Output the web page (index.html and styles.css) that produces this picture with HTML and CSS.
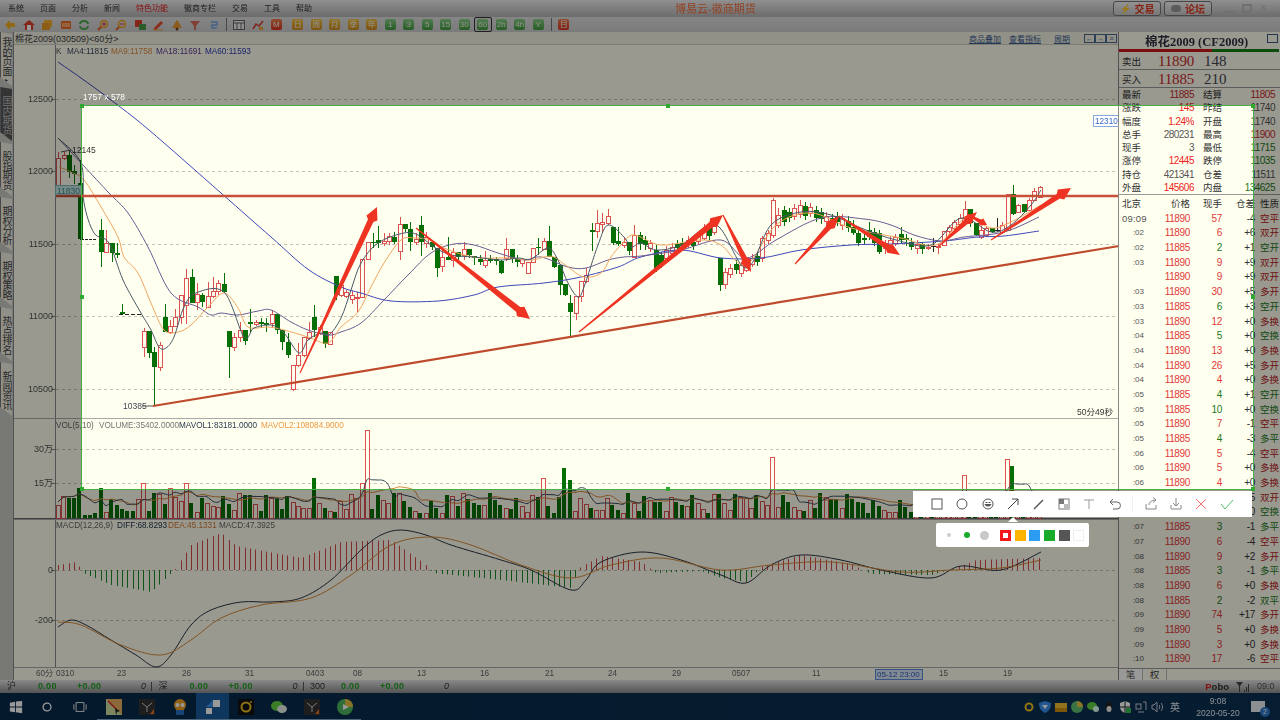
FILE: index.html
```html
<!DOCTYPE html>
<html lang="zh">
<head>
<meta charset="utf-8">
<title>博易云-徽商期货</title>
<link rel="stylesheet" href="styles.css">
</head>
<body>
<header class="menubar">
  <nav class="menu">
    <span>系统</span><span>页面</span><span>分析</span><span>新闻</span><span class="hot">特色功能</span><span>徽商专栏</span><span>交易</span><span>工具</span><span>帮助</span>
  </nav>
  <div class="app-title">博易云-徽商期货</div>
  <div class="top-actions">
    <button class="top-btn"><i class="bolt">⚡</i>交易</button>
    <button class="top-btn"><i class="bubble"></i>论坛</button>
    <div class="winctl"><span class="w-min"></span><span class="w-max"></span><span class="w-close">×</span></div>
  </div>
</header>

<div class="toolbar">
  <span class="tool"><svg viewBox="0 0 12 12"><path d="M1 6 6 1v3h5v4H6v3z" fill="#f0b020"/></svg></span>
  <span class="tool"><svg viewBox="0 0 12 12"><path d="M6 1 0 6h2v5h8V6h2z" fill="#d8402a"/><rect x="4" y="6" width="4" height="5" fill="#fff"/></svg></span>
  <span class="tool"><svg viewBox="0 0 12 12"><rect x="3" y="1" width="8" height="7" fill="#f8b030"/><rect x="1" y="4" width="8" height="7" fill="#e89a20"/></svg></span>
  <span class="tool"><svg viewBox="0 0 12 12"><rect x="1" y="2" width="10" height="8" rx="1" fill="#ea6a28"/><path d="M3 4v4M5 4v4M7 4v4M9 4v4" stroke="#ffe0a0"/></svg></span>
  <span class="tool"><svg viewBox="0 0 12 12" fill="none" stroke="#4aa84a" stroke-width="2"><path d="M2 5a4 3 0 0 1 8 0M10 7a4 3 0 0 1-8 0"/></svg></span>
  <span class="tool"><svg viewBox="0 0 12 12" fill="none"><circle cx="7" cy="5" r="3.5" stroke="#f0a020" stroke-width="1.5"/><path d="M4 8 1 11" stroke="#e06020" stroke-width="2"/><path d="M5 5h4M7 3v4" stroke="#d83020"/></svg></span>
  <span class="tool"><svg viewBox="0 0 12 12" fill="none"><circle cx="7" cy="5" r="3.5" stroke="#f0a020" stroke-width="1.5"/><path d="M4 8 1 11" stroke="#e06020" stroke-width="2"/><path d="M5 5h4" stroke="#d83020"/></svg></span>
  <span class="tool"><svg viewBox="0 0 12 12"><rect x="1" y="1" width="7" height="7" fill="#e0402a"/><rect x="5" y="5" width="7" height="6" fill="#4a9a4a"/></svg></span>
  <span class="tool"><svg viewBox="0 0 12 12"><path d="M2 9 9 2l2 2-7 7H2z" fill="#e84a30"/><path d="M1 11h10" stroke="#f0a040"/></svg></span>
  <span class="tool"><svg viewBox="0 0 12 12"><path d="M6 1c2 2 3 5 5 8H1c2-3 3-6 5-8z" fill="#e89a30"/><circle cx="6" cy="10" r="1.5" fill="#704020"/></svg></span>
  <span class="tool"><svg viewBox="0 0 12 12"><path d="M1 2h10L7 7v4H5V7z" fill="#d86a5a"/></svg></span>
  <span class="tool"><svg viewBox="0 0 12 12"><path d="M3 3h6v3H4v3h5" fill="none" stroke="#8ab0e0" stroke-width="2"/></svg></span>
  <span class="tool-sep"></span>
  <span class="tool"><svg viewBox="0 0 12 12"><rect x=".5" y="1.5" width="11" height="9" fill="#eee" stroke="#666"/><path d="M1 4h10M4 4v6M8 4v6" stroke="#666"/></svg></span>
  <span class="tool"><svg viewBox="0 0 12 12" fill="none"><path d="M1 10 4 5l3 2 4-5" stroke="#d83a2a" stroke-width="1.5"/><rect x="7" y="8" width="4" height="3" fill="#e8a030"/></svg></span>
  <span class="tool"><b class="sq sq-red">M</b></span>
  <span class="tool tool-gap"><b class="sq sq-or">日</b></span>
  <span class="tool"><b class="sq sq-or">周</b></span>
  <span class="tool"><b class="sq sq-or">月</b></span>
  <span class="tool"><b class="sq sq-or">季</b></span>
  <span class="tool"><b class="sq sq-or">年</b></span>
  <span class="tool"><b class="sq sq-gr">1</b></span>
  <span class="tool"><b class="sq sq-gr">3</b></span>
  <span class="tool"><b class="sq sq-gr">5</b></span>
  <span class="tool"><b class="sq sq-gr">15</b></span>
  <span class="tool"><b class="sq sq-gr">30</b></span>
  <span class="tool tool-on"><b class="sq sq-gr">60</b></span>
  <span class="tool"><b class="sq sq-gr">2h</b></span>
  <span class="tool"><b class="sq sq-gr">4h</b></span>
  <span class="tool"><b class="sq sq-gr">Y</b></span>
  <span class="tool-sep"></span>
  <span class="tool"><b class="sq sq-red">目</b></span>
</div>

<main class="main">
  <aside class="sidetabs">
    <div class="stab">我的页面<i>▸</i></div>
    <div class="stab stab-on">国内期货</div>
    <div class="stab">股指期货</div>
    <div class="stab">期权分析</div>
    <div class="stab">期权策略</div>
    <div class="stab">热点排名</div>
    <div class="stab">新闻资讯</div>
  </aside>

  <section class="workspace">
    <div class="chart-head">
      <span class="chart-name">棉花2009(030509)&lt;60分&gt;</span>
      <span class="chart-links"><a>商品叠加</a><a>查看指标</a><a class="link-gap">周期</a></span>
      <span class="chart-nav"><i>←</i><i>→</i><i>≡</i></span>
    </div>
    <svg id="chart" class="chart" viewBox="13 45 1105 635" xmlns="http://www.w3.org/2000/svg"></svg>
  </section>

  <aside class="quote">
    <div class="q-title"><span>棉花2009 (CF2009)</span><i class="q-box"></i></div>
    <div class="q-bar"><i></i></div>
    <div class="q-book"><span class="lbl">卖出</span><b class="up">11890</b><em>148</em></div>
    <div class="q-book"><span class="lbl">买入</span><b class="up">11885</b><em>210</em></div>
    <div class="q-stats">
      <span>最新</span><b class="up">11885</b><span>结算</span><b class="up">11805</b>
      <span>涨跌</span><b class="hi">145</b><span>昨结</span><b>11740</b>
      <span>幅度</span><b class="hi">1.24%</b><span>开盘</span><b>11740</b>
      <span>总手</span><b>280231</b><span>最高</span><b class="up">11900</b>
      <span>现手</span><b>3</b><span>最低</span><b class="dn">11715</b>
      <span>涨停</span><b class="hi">12445</b><span>跌停</span><b class="dn">11035</b>
      <span>持仓</span><b>421341</b><span>仓差</span><b>11511</b>
      <span>外盘</span><b class="hi">145606</b><span>内盘</span><b class="dn">134625</b>
    </div>
    <div id="trades" class="trades">
      <span>北京</span><span class="r">价格</span><span class="r">现手</span><span class="r">仓差</span><span class="t">性质</span>
    </div>
    <div class="q-tabs"><span class="qt-on">笔</span><span>权</span></div>
  </aside>
</main>

<footer class="statusbar">
  <div class="idx"><span>沪</span><b>0.00</b><b>+0.00</b><em>0</em><s></s></div>
  <div class="idx"><span>深</span><b>0.00</b><b>+0.00</b><em>0</em><s></s></div>
  <div class="idx"><span>300</span><b>0.00</b><b>+0.00</b><em>0</em></div>
  <div class="status-right">
    <span class="pobo"><u>P</u>obo</span>
    <svg class="sig" viewBox="0 0 14 10"><path d="M0 0h7L4 4v6H3V4zM8 8h1v2H8zM10 5h1v5h-1zM12 2h1v8h-1z" fill="#444"/></svg>
    <span class="clock">09:0</span>
  </div>
</footer>

<div class="taskbar">
  <svg class="tb-ico tb-first" viewBox="0 0 16 16"><path d="M1 3l6-1v5.500H1zM8 1.800 15 1v6.500H8zM1 8.500h6V14l-6-1zM8 8.500h7V15l-7-1z" fill="#fff"/></svg>
  <svg class="tb-ico" viewBox="0 0 16 16"><circle cx="8" cy="8" r="4.500" fill="none" stroke="#fff" stroke-width="1.500"/></svg>
  <svg class="tb-ico" viewBox="0 0 16 16" fill="none" stroke="#fff"><rect x="3.500" y="3" width="9" height="10"/><path d="M1 5v6M15 5v6"/></svg>
  <span class="app"><svg viewBox="0 0 16 16"><rect width="16" height="16" fill="#cfe0a0"/><path d="M0 0l16 16V0z" fill="#e8b060"/><path d="M2 2l8 8" stroke="#e02020" stroke-width="1.500"/><path d="M9 9l5 3-3 1-1 3z" fill="#222"/></svg></span>
  <span class="app"><svg viewBox="0 0 16 16"><rect width="16" height="16" fill="#333"/><path d="M3 4l5 4 5-4M8 8v5" stroke="#ccc" fill="none"/><path d="M11 15l4-5v5z" fill="#e87030"/></svg></span>
  <span class="app"><svg viewBox="0 0 16 16"><circle cx="8" cy="6" r="6" fill="#f0a020"/><circle cx="5.500" cy="6" r="2" fill="#fff"/><circle cx="10.500" cy="6" r="2" fill="#fff"/><rect x="4" y="11" width="8" height="5" fill="#2a70c0"/></svg></span>
  <span class="app app-on"><svg viewBox="0 0 16 16"><path d="M8 1h7v7H8z" fill="#fff"/><path d="M1 9h6v6H1z" fill="#fff"/><path d="M8 1 1 8h7z" fill="#3a90e8"/></svg></span>
  <span class="app"><svg viewBox="0 0 16 16"><rect width="16" height="16" fill="#111"/><circle cx="8" cy="8" r="4.500" fill="none" stroke="#f0c020" stroke-width="2"/><circle cx="13" cy="3" r="1" fill="#f0c020"/></svg></span>
  <span class="app"><svg viewBox="0 0 16 16"><ellipse cx="6" cy="7" rx="6" ry="5" fill="#60d040"/><ellipse cx="11" cy="10" rx="5" ry="4" fill="#e8f0e8"/></svg></span>
  <span class="app"><svg viewBox="0 0 16 16"><rect width="16" height="16" fill="#333"/><path d="M3 4l5 4 5-4M8 8v5" stroke="#ccc" fill="none"/><path d="M11 15l4-5v5z" fill="#e87030"/></svg></span>
  <span class="app"><svg viewBox="0 0 16 16"><circle cx="8" cy="8" r="8" fill="#50b860"/><path d="M8 0a8 8 0 0 1 8 8H8z" fill="#e8c040"/><path d="M6 5l6 3-6 3z" fill="#fff"/></svg></span>
  <div class="tray">
    <svg viewBox="0 0 12 12"><circle cx="6" cy="6" r="3.500" fill="none" stroke="#f0c020" stroke-width="2"/></svg>
    <svg viewBox="0 0 12 12"><path d="M6 0l6 2c0 5-2 8-6 10C2 10 0 7 0 2z" fill="#3a90f0"/><path d="M3 4h6L6 8z" fill="#fff"/></svg>
    <svg viewBox="0 0 12 12"><rect y="2" width="12" height="9" fill="#f0c030"/><rect y="7" width="12" height="4" fill="#d09010"/></svg>
    <svg viewBox="0 0 12 12"><circle cx="6" cy="6" r="6" fill="#60c070"/><path d="M6 0a6 6 0 0 1 6 6H6z" fill="#e8c040"/></svg>
    <svg viewBox="0 0 12 12"><ellipse cx="5" cy="5" rx="5" ry="4" fill="#60d040"/><ellipse cx="9" cy="8" rx="3" ry="3" fill="#dfe"/></svg>
    <svg viewBox="0 0 12 12"><ellipse cx="6" cy="6" rx="3.500" ry="5" fill="#222"/><ellipse cx="6" cy="8" rx="2.500" ry="3" fill="#eee"/></svg>
    <svg viewBox="0 0 12 12"><path d="M6 0l5 2v4c0 3-2 5-5 6-3-1-5-3-5-6V2z" fill="#fff"/><path d="M6 0v12M1 6h10" stroke="#222"/><rect x="7" y="7" width="5" height="5" fill="#30c050"/></svg>
    <svg viewBox="0 0 12 12" fill="none" stroke="#ccd"><rect x="1" y="3" width="5" height="5"/><path d="M8 1h3v8M3 11h6"/></svg>
    <svg viewBox="0 0 12 12" fill="none" stroke="#ccd"><path d="M1 4h2l3-3v10L3 8H1zM8 4c1 1 1 3 0 4M10 2c2 2 2 6 0 8"/></svg>
    <span class="ime">英</span>
    <div class="sysclock"><span>9:08</span><span>2020-05-20</span></div>
    <span class="notify"><i>2</i></span>
  </div>
</div>

<div class="selection">
  <span class="sel-size">1757 x 578</span>
  <i class="hd hd-tl"></i><i class="hd hd-tm"></i><i class="hd hd-tr"></i><i class="hd hd-ml"></i><i class="hd hd-mr"></i><i class="hd hd-bl"></i><i class="hd hd-bm"></i><i class="hd hd-br"></i>
</div>

<div class="shot-tools">
  <svg viewBox="0 0 16 16" fill="none" stroke="#555"><rect x="3" y="3" width="10" height="10"/></svg>
  <svg viewBox="0 0 16 16" fill="none" stroke="#555"><circle cx="8" cy="8" r="5"/></svg>
  <svg viewBox="0 0 16 16" fill="none" stroke="#555"><circle cx="8" cy="8" r="5"/><path d="M5 8.500c1 2 5 2 6 0z" fill="#555"/><path d="M5.500 6.500h2M8.500 6.500h2"/></svg>
  <svg viewBox="0 0 16 16" fill="none" stroke="#444"><path d="M3 13 13 3M7 3h6v6"/></svg>
  <svg viewBox="0 0 16 16" fill="none" stroke="#555" stroke-width="1.500"><path d="M3 13 12 4"/></svg>
  <svg viewBox="0 0 16 16"><rect x="3" y="3" width="10" height="10" fill="#fff" stroke="#777"/><rect x="3" y="3" width="5" height="5" fill="#777"/><rect x="8" y="8" width="5" height="5" fill="#bbb"/></svg>
  <svg viewBox="0 0 16 16" fill="none" stroke="#999"><path d="M3 4h10M8 4v9"/></svg>
  <svg viewBox="0 0 16 16" fill="none" stroke="#666"><path d="M3 6h7a3 3 0 0 1 0 7H6M3 6l3-3M3 6l3 3"/></svg>
  <i class="st-sep"></i>
  <svg viewBox="0 0 16 16" fill="none" stroke="#888"><path d="M3 8v5h10V9M6 9c0-3 3-5 7-5M10 1.500 13 4l-3 2.500"/></svg>
  <svg viewBox="0 0 16 16" fill="none" stroke="#888"><path d="M3 9v4h10V9M8 2v8M5 7l3 3 3-3"/></svg>
  <svg viewBox="0 0 16 16" fill="none" stroke="#ec7070"><path d="M3 3l10 10M13 3 3 13"/></svg>
  <svg viewBox="0 0 16 16" fill="none" stroke="#50c060"><path d="M2 8l4 5 8-9"/></svg>
  <span class="st-caret"></span>
</div>
<div class="palette">
  <i class="dot d1"></i><i class="dot d2"></i><i class="dot d3"></i>
  <i class="sw sw-red"></i><i class="sw sw-or"></i><i class="sw sw-bl"></i><i class="sw sw-gr"></i><i class="sw sw-dk"></i><i class="sw sw-wh"></i>
</div>

<script src="script.js"></script>
</body>
</html>
```
FILE: styles.css
```css
* { box-sizing: border-box; }
html, body { margin: 0; height: 100%; }
body {
  width: 1280px; height: 720px; overflow: hidden; position: relative;
  display: flex; flex-direction: column;
  font-family: "Liberation Sans", "Noto Sans CJK SC", sans-serif;
  background: #fffff0; color: #444;
}
i { font-style: normal; }

/* the reference is a slightly soft video frame */
.menubar, .toolbar, .main, .statusbar, .taskbar { filter: blur(.35px); }

/* title / menu */
.menubar {
  height: 17px; flex: none; display: flex; align-items: center; position: relative;
  background: linear-gradient(#f0f0f0, #b4b4b4);
}
.menu { display: flex; gap: 16px; padding-left: 8px; font-size: 8px; line-height: 17px; color: #333; }
.menu .hot { color: #e01818; }
.app-title { position: absolute; left: 675px; top: 2px; font-size: 11px; line-height: 14px; color: #f4703c; }
.top-actions { margin-left: auto; display: flex; align-items: center; height: 17px; padding-right: 10px; }
.top-btn {
  width: 48px; height: 15px; margin-right: 3px; padding: 0; border: 1px solid #777; border-radius: 3px;
  background: linear-gradient(#f4f4f4, #c8c8c8); color: #e03a20; font: bold 10px "Noto Sans CJK SC", sans-serif;
  display: flex; align-items: center; justify-content: center; gap: 4px;
}
.bolt { color: #f09020; font-size: 9px; }
.bubble { width: 10px; height: 7px; border-radius: 4px; background: #999; }
.winctl { display: flex; gap: 8px; margin-left: 9px; }
.winctl span { width: 10px; height: 9px; color: #bbb; font-size: 12px; line-height: 9px; }
.w-min { border-bottom: 2px solid #bbb; }
.w-max { border: 2px solid #bbb; }

/* toolbar */
.toolbar {
  height: 15px; flex: none; display: flex; align-items: center; padding-left: 1px;
  background: linear-gradient(#dedede, #cdcdcd);
}
.tool { width: 18.5px; height: 15px; flex: none; display: flex; align-items: center; justify-content: center; }
.tool svg { width: 12px; height: 12px; }
.tool-gap { margin-left: 3px; }
.tool-on { outline: 1px solid #333; outline-offset: -1px; border-radius: 2px; }
.tool-sep { width: 1px; height: 13px; margin: 0 3px; background: #777; flex: none; }
.sq {
  width: 11px; height: 11px; border-radius: 2px; display: block;
  font: 8px/11px "Liberation Sans", "Noto Sans CJK SC", sans-serif; color: #f4f4e0; text-align: center;
}
.sq-or { background: linear-gradient(#f0c040, #d08a20); }
.sq-gr { background: linear-gradient(#8ad08a, #3f9a3f); }
.sq-red { background: linear-gradient(#f08050, #d83020); }

/* main */
.main { height: 648px; flex: none; display: flex; }
.sidetabs {
  width: 13px; flex: none; display: flex; flex-direction: column; gap: 1px;
  background: #c8c8c4;
}
.stab {
  width: 12px; height: 54px; flex: none; padding-top: 3px;
  background: #f0f0e4; color: #444; font-size: 10px; line-height: 12px; text-align: center;
  writing-mode: vertical-rl; text-orientation: upright; letter-spacing: -.2px;
  clip-path: polygon(0 0, 100% 2px, 100% 100%, 100% 100%, 0 calc(100% - 9px));
  border-left: 1px solid #777;
}
.stab i { font-size: 6px; }
.stab-on { background: #585858; color: #bbb; }
.workspace { flex: 1; min-width: 0; display: flex; flex-direction: column; border-left: 1px solid #888; }
.chart-head {
  height: 13px; flex: none; display: flex; align-items: center; padding: 0 1px;
  background: #f2f2e2; border-bottom: 1px solid #d0d0c0; font-size: 9px; color: #444;
}
.chart-links { margin-left: auto; display: flex; gap: 8px; font-size: 8px; color: #3a5a90; }
.chart-links a { text-decoration: underline; }
.link-gap { margin-left: 5px; }
.chart-nav { display: flex; margin-left: 14px; }
.chart-nav i {
  width: 11px; height: 9px; border: 1px solid #4a6a90; font-size: 7px; line-height: 7px; text-align: center; color: #4a6a90;
}
.chart { display: block; width: 1105px; height: 635px; flex: none; background: #fffff0; }
.chart text { font-family: "Liberation Sans", "Noto Sans CJK SC", sans-serif; }

/* quote panel */
.quote { width: 162px; flex: none; display: flex; flex-direction: column; background: #fffff0; border-left: 1px solid #888; position: relative; }
.q-title {
  height: 17px; flex: none; display: flex; align-items: center; justify-content: center; position: relative;
  font: bold 12.5px "Liberation Serif", "Noto Sans CJK SC", serif; color: #334; padding-right: 6px;
}
.q-box { position: absolute; right: 2px; top: 2px; width: 11px; height: 9px; border: 1px solid #3a5a80; }
.q-bar { height: 3px; flex: none; margin-right: 1px; background: #158015; }
.q-bar i { display: block; width: 93px; height: 3px; background: #d01818; }
.q-book {
  height: 18px; flex: none; display: flex; align-items: center; padding: 1px 0 0 3px; border-bottom: 1px solid #999;
  font-size: 9.500px;
}
.q-book .lbl { width: 20px; color: #333; }
.q-book b { width: 52px; text-align: right; font: 15px "Liberation Serif", serif; letter-spacing: -.2px; }
.q-book em { margin-left: 10px; font: 15px "Liberation Serif", serif; color: #445; }
.q-stats {
  flex: none; display: grid; grid-template-columns: 20px 52px 20px 52px; grid-auto-rows: 13.300px;
  padding-left: 3px; font-size: 9.500px; line-height: 13.300px; border-bottom: 1px solid #999; height: 107px;
}
.q-stats span { color: #333; }
.q-stats span:nth-of-type(even) { margin-left: 9px; width: 20px; }
.q-stats b { font-weight: 400; text-align: right; color: #555; font-size: 10px; letter-spacing: -.5px; }
.q-stats b:nth-of-type(even) { margin-right: -9px; margin-left: 9px; }
.up { color: #c82a2a !important; }
.hi { color: #ee2222 !important; }
.dn { color: #1a7a1a !important; }
.trades {
  flex: 1; min-height: 0; overflow: hidden; display: grid; grid-template-columns: 26px 42px 32px 33px 23px;
  grid-auto-rows: 14.700px; padding: 2px 0 0 3px; font-size: 9.500px; line-height: 14.700px;
}
.trades span { white-space: nowrap; color: #333; }
.trades .r { text-align: right; }
.trades .t { padding-left: 5px; }
.trades .num { font-size: 10px; letter-spacing: -.35px; text-align: right; }
.trades .tm { text-align: right; padding-right: 4px; font-size: 8px; color: #555; }
.trades .tm0 { text-align: left; padding: 0; font-size: 9.500px; color: #555; letter-spacing: .2px; }
.trades .p { color: #e03a3a; }
.trades .g { color: #1a7a1a; }
.trades .t.p { color: #b82020; }
.q-tabs {
  height: 12px; flex: none; display: flex; border-top: 1px solid #999; font-size: 9.500px; line-height: 11px; background: #fffff0;
}
.q-tabs span { width: 24px; text-align: center; color: #444; border-right: 1px solid #bbb; }
.qt-on { background: #fff; }

/* status */
.statusbar {
  height: 13px; flex: none; display: flex; align-items: center; padding-left: 7px;
  background: linear-gradient(#e4e4e4, #8c8c8c); font-size: 9px; color: #333; line-height: 13px;
}
.idx { width: 151.500px; flex: none; display: flex; align-items: center; position: relative; height: 13px; }
.idx span { width: 31px; }
.idx b { color: #20a020; font-size: 9px; letter-spacing: .3px; }
.idx b:nth-of-type(1) { width: 39px; }
.idx b:nth-of-type(2) { width: 64px; }
.idx s { width: 1px; height: 9px; background: #555; margin-left: 5px; }
.status-right { margin-left: auto; display: flex; align-items: center; gap: 7px; }
.pobo { font-weight: 700; font-size: 9.500px; color: #333; }
.pobo u { color: #e02020; text-decoration: none; }
.sig { width: 14px; height: 10px; }
.clock { width: 23px; color: #555; overflow: hidden; }

/* taskbar */
.taskbar {
  height: 27px; flex: none; display: flex; align-items: center; padding-left: 9px;
  background: linear-gradient(90deg, #082a49, #0a3052);
}
.tb-ico { width: 14px; height: 14px; flex: none; }
.tb-first { margin-right: 17px; }
.tb-ico + .tb-ico { margin-right: 19px; }
.tb-ico + .tb-ico + .tb-ico { margin-right: 10px; }
.app { width: 33px; height: 27px; flex: none; display: flex; align-items: center; justify-content: center; box-shadow: inset 0 -1px 0 #7fa8d0; }
.app svg { width: 16px; height: 16px; }
.app-on { background: #1a5a9a; }
.tray { margin-left: auto; display: flex; align-items: center; height: 27px; gap: 4px; }
.tray svg { width: 12px; height: 12px; flex: none; }
.ime { color: #e8eef4; font-size: 10px; margin-left: 3px; }
.sysclock { width: 60px; margin-left: 4px; text-align: center; color: #e8eef4; font-size: 8.500px; line-height: 12px; display: flex; flex-direction: column; }
.notify { width: 14px; height: 11px; margin: 0 15px 0 -1px; background: #e8eef4; position: relative; }
.notify i { position: absolute; right: -5px; bottom: -5px; width: 10px; height: 10px; border-radius: 50%; background: #2a78c8; color: #fff; font-size: 7px; line-height: 10px; text-align: center; }

/* screenshot-tool overlay: sits over the whole page */
.selection {
  position: absolute; left: 81px; top: 105px; width: 1173px; height: 385px;
  border: 1px solid #46b046; box-shadow: 0 0 0 3000px rgba(0, 0, 0, .4); z-index: 5; pointer-events: none;
}
.sel-size { position: absolute; left: 1px; top: -15px; font-size: 8.500px; line-height: 12px; color: #fff; }
.hd { position: absolute; width: 4px; height: 4px; background: #2fa82f; }
.hd-tl { left: -2px; top: -2px; } .hd-tm { left: 584px; top: -2px; } .hd-tr { right: -2px; top: -2px; }
.hd-ml { left: -2px; top: 189px; } .hd-mr { right: -2px; top: 189px; }
.hd-bl { left: -2px; bottom: -2px; } .hd-bm { left: 584px; bottom: -2px; } .hd-br { right: -2px; bottom: -2px; }
.shot-tools {
  position: absolute; left: 913px; top: 491px; width: 339px; height: 26px; z-index: 6;
  background: #fff; display: flex; align-items: center; padding-left: 16px; gap: 9.400px;
}
.shot-tools svg { width: 16px; height: 16px; flex: none; }
.st-sep { width: 1px; height: 14px; background: #eee; flex: none; }
.st-caret {
  position: absolute; left: 95px; top: 26px; width: 0; height: 0;
  border: 5px solid transparent; border-top: 0; border-bottom-color: #fff;
}
.palette {
  position: absolute; left: 936px; top: 523px; width: 153px; height: 24px; z-index: 6;
  background: #fff; border-radius: 2px; display: flex; align-items: center; padding-left: 11px;
}
.dot { border-radius: 50%; flex: none; }
.d1 { width: 4px; height: 4px; background: #ccc; margin-right: 13px; }
.d2 { width: 6px; height: 6px; background: #1aab2a; margin-right: 10px; }
.d3 { width: 9px; height: 9px; background: #c8c8c8; margin-right: 11px; }
.sw { width: 11px; height: 11px; margin-right: 3.700px; flex: none; }
.sw-red { background: #fff; border: 3px solid #f01818; }
.sw-or { background: #fdb300; }
.sw-bl { background: #2b9cf2; }
.sw-gr { background: #1aab2a; }
.sw-dk { background: #555; }
.sw-wh { background: #fff; border: 1px solid #eee; }
```
FILE: script.js
```js
const NS = 'http://www.w3.org/2000/svg';
const svg = document.getElementById('chart');
const el = (tag, attrs, text) => {
  const n = document.createElementNS(NS, tag);
  for (const k in attrs) n.setAttribute(k, attrs[k]);
  if (text !== undefined) n.textContent = text;
  svg.appendChild(n);
  return n;
};
const line = (x1, y1, x2, y2, stroke, extra) => el('line', Object.assign({ x1, y1, x2, y2, stroke }, extra));
// smooth curve through the sampled points (Catmull-Rom to Bezier)
const poly = (p, stroke, w) => {
  let d = 'M' + p[0].join(' ');
  for (let i = 0; i < p.length - 1; i++) {
    const a = p[Math.max(0, i - 1)], b = p[i], c = p[i + 1], e = p[Math.min(p.length - 1, i + 2)];
    const c1 = [b[0] + (c[0] - a[0]) / 6, b[1] + (c[1] - a[1]) / 6];
    const c2 = [c[0] - (e[0] - b[0]) / 6, c[1] - (e[1] - b[1]) / 6];
    d += 'C' + [c1, c2, c].map(q => q[0].toFixed(1) + ' ' + q[1].toFixed(1)).join(' ');
  }
  return el('path', { d, fill: 'none', stroke, 'stroke-width': w || 1 });
};
const label = (x, y, s, fill, size, anchor) => el('text', { x, y, fill, 'font-size': size || 8.2, 'text-anchor': anchor || 'start' }, s);

const GRID = { 'stroke-dasharray': '3 3' };
[99, 171, 244, 316, 389, 449, 483, 570, 620].forEach(y => {
  line(55, y + .5, 1118, y + .5, '#c4c4b4', GRID);
  line(50, y + .5, 54, y + .5, '#888');
});
line(54.5, 45, 54.5, 668, '#888');
[418, 667].forEach(y => line(13, y + .5, 1118, y + .5, '#aaa'));
line(13, 518.5, 1118, 518.5, '#666');
line(13, 519.5, 1118, 519.5, '#aaa');

[[99, '12500'], [171, '12000'], [244, '11500'], [316, '11000'], [389, '10500'], [449, '30万'], [483, '15万'], [570, '0'], [620, '-200']].forEach(([y, s]) => label(52, y + 3, s, '#555', 9, 'end'));

const K = 'r57,158,185,152,187;r63,155,158,152,160;g68,155,172,150,178;g73,171,174,165,184;g79,183,239,160,240;g100,230,252,219,267;r105,243,252,230,253;g111,243,253,243,262;g116,253,255,243,258;g121,312,314,304,314;r143,331,347,328,357;g148,331,353,331,358;g153,352,367,347,406;r159,345,367,342,371;g164,317,332,304,332;r169,326,332,320,334;r174,317,326,309,327;r180,295,317,295,324;r185,278,305,269,324;g191,277,303,269,303;r196,294,302,283,310;g201,295,302,293,307;r207,296,307,282,308;r212,291,296,277,298;r217,283,291,280,295;g223,284,292,273,293;g228,331,347,331,378;r233,337,347,333,351;r239,330,337,322,342;g244,330,341,330,345;g249,322,324,309,333;r255,322,324,320,326;g260,322,324,318,328;g265,323,325,318,332;r271,314,323,310,327;g276,314,330,314,334;g281,330,342,330,350;g287,342,355,333,358;r292,365,389,365,391;r297,355,365,343,367;r303,337,355,337,357;r308,332,338,322,340;g313,317,330,305,337;r319,327,333,325,335;g324,331,344,331,348;r329,332,344,332,345;g335,276,295,276,300;r340,285,295,283,297;r345,292,296,290,298;r351,295,299,291,304;r356,297,298,292,312;r361,259,297,259,298;r367,242,259,242,260;g372,242,243,233,248;g377,240,243,226,248;r383,241,243,233,246;r388,236,241,233,245;g393,237,242,232,244;r399,224,251,217,260;g404,224,229,224,232;g409,229,242,222,251;r415,239,242,233,245;g420,225,242,216,256;r425,237,243,232,248;g431,242,247,242,250;g436,248,268,248,277;r441,257,266,247,272;g447,257,260,237,260;r452,252,260,248,267;g457,252,257,252,260;r463,249,255,242,260;g468,249,255,249,258;g473,256,258,256,265;g479,259,262,255,265;r484,260,265,251,268;g489,259,261,255,263;g495,259,261,257,265;g500,261,273,260,274;r505,249,258,238,261;g511,249,259,249,263;g516,259,262,255,267;r521,259,263,258,267;r527,262,273,262,274;r532,248,262,248,263;g537,247,248,238,255;r543,241,249,238,250;g548,241,257,226,257;g553,257,267,257,268;g559,265,285,265,295;g564,284,295,284,296;g569,303,312,295,336;r575,296,313,296,320;r580,281,296,281,302;r585,275,281,268,283;g591,230,232,223,251;r596,223,231,210,238;r601,222,224,213,233;r607,216,223,209,225;g612,227,243,227,245;g617,241,244,227,246;r623,242,245,238,248;g628,242,251,242,255;r633,235,257,225,257;g639,235,244,232,250;g644,240,245,236,250;r649,243,248,240,252;g655,250,268,245,272;g660,255,265,252,268;r665,250,258,246,261;r671,247,253,243,256;g676,244,248,240,252;g681,243,246,238,250;r687,240,244,236,248;g692,242,246,238,250;r697,236,241,232,244;r703,230,238,224,240;g708,228,236,224,240;r713,226,232,222,235;g719,258,285,258,291;r724,272,284,268,289;r729,268,274,264,278;g735,264,270,260,274;r740,265,273,262,277;r745,262,270,258,272;r751,258,264,254,267;g756,256,262,252,266;r761,238,258,236,262;r767,233,240,230,244;r772,200,235,198,238;r777,215,225,208,228;g783,210,222,206,226;g788,212,218,208,222;r793,208,216,204,220;r799,205,214,200,218;g804,206,216,202,220;r809,207,213,203,217;g815,210,218,206,222;g820,212,219,208,224;r825,216,221,212,226;g831,218,224,214,228;g836,216,222,212,226;r841,218,225,214,230;g847,221,228,216,232;g852,227,233,220,235;g857,233,243,230,246;g863,238,240,234,244;g868,230,237,222,240;g873,232,243,228,246;g878,233,252,230,254;r884,243,248,240,254;r889,240,247,236,250;r894,237,243,234,246;g900,234,240,227,244;g905,238,240,234,246;g910,242,247,238,250;r916,244,248,240,254;g921,244,249,242,254;r927,247,248,244,250;k932,246,247,238,252;r937,246,247,244,254;r943,231,245,231,246;r948,227,231,225,238;r953,222,228,220,232;r959,218,224,214,228;r964,209,218,201,220;g969,209,223,209,227;g975,223,235,223,236;r980,230,237,226,239;r985,228,235,226,237;g991,228,232,228,233;k996,230,231,218,232;r1001,225,232,222,234;r1007,194,230,194,231;g1012,194,214,185,215;r1017,205,212,204,213;g1023,204,212,204,213;r1028,200,210,198,211;r1033,191,200,188,201;r1039,187,197,186,198'
  .split(';').map(s => { const p = s.slice(1).split(',').map(Number); return { c: s[0], x: p[0], t: p[1], b: p[2], h: p[3], l: p[4] }; });
const RED = '#dc5252', GRN = '#067006', INK = '#222';

// moving-average lines
const ma60 = [[57, 62], [80, 78], [110, 100], [148, 130], [220, 193], [270, 237], [308, 270], [340, 287], [360, 293], [390, 301], [437, 301], [473, 295], [497, 287], [543, 283], [580, 277], [617, 267], [640, 257], [680, 250], [720, 258], [760, 258], [800, 250], [850, 245], [890, 244], [943, 241], [977, 237], [1003, 236], [1038, 231]];
const ma18 = [[57, 138], [82, 165], [108, 193], [127, 213], [147, 247], [170, 293], [197, 307], [210, 315], [220, 313], [237, 315], [257, 311], [270, 310], [290, 322], [307, 330], [327, 335], [340, 332], [360, 323], [383, 300], [407, 275], [430, 253], [453, 244], [473, 245], [497, 253], [523, 260], [540, 257], [567, 267], [585, 268], [607, 260], [623, 257], [640, 256], [680, 250], [720, 240], [745, 258], [775, 240], [820, 218], [863, 219], [890, 225], [913, 235], [940, 241], [963, 237], [1003, 232], [1038, 217]];
const ma9 = [[58, 167], [70, 172], [83, 180], [100, 207], [117, 237], [123, 257], [137, 273], [150, 303], [163, 330], [177, 332], [190, 325], [207, 307], [223, 293], [237, 308], [247, 327], [267, 327], [283, 330], [307, 337], [327, 343], [340, 327], [357, 312], [370, 287], [383, 263], [400, 240], [413, 238], [430, 240], [443, 248], [463, 255], [480, 258], [507, 258], [530, 260], [543, 257], [553, 257], [567, 267], [583, 277], [600, 273], [610, 257], [620, 245], [633, 235], [660, 245], [700, 240], [720, 245], [745, 265], [775, 225], [810, 213], [850, 228], [900, 238], [935, 245], [965, 218], [990, 228], [1010, 222], [1040, 205]];
const ma4 = [[57, 138], [80, 163], [83, 203], [93, 233], [108, 243], [122, 280], [140, 313], [150, 330], [158, 347], [165, 348], [173, 337], [183, 307], [195, 293], [223, 292], [243, 337], [253, 328], [270, 325], [283, 333], [298, 353], [307, 340], [320, 333], [328, 335], [340, 318], [350, 290], [360, 263], [377, 243], [403, 233], [417, 235], [433, 247], [450, 255], [473, 257], [500, 260], [517, 258], [530, 259], [547, 248], [557, 260], [567, 283], [577, 297], [583, 287], [597, 245], [607, 225], [623, 237], [630, 247], [640, 243], [655, 250], [680, 245], [715, 225], [745, 268], [770, 225], [800, 212], [830, 215], [860, 228], [895, 240], [930, 245], [960, 218], [990, 232], [1010, 225], [1030, 205], [1040, 190]];

K.forEach(k => {
  const col = k.c === 'r' ? RED : k.c === 'g' ? GRN : INK;
  const x = k.x + .5;
  line(x, k.h, x, k.l, col);
  if (k.c === 'r') el('rect', { x: k.x - 2 + .5, y: k.t + .5, width: 4, height: Math.max(1, k.b - k.t), fill: '#fffff0', stroke: col });
  else el('rect', { x: k.x - 2, y: k.t, width: 5, height: Math.max(1, k.b - k.t), fill: col });
});
poly(ma60, '#3f47b8');
poly(ma18, '#6b5a92');
poly(ma9, '#eea55e');
poly(ma4, '#4a5868');

label(55, 54, 'K', '#555');
label(66, 54, 'MA4:11815', '#3a4a5a');
label(110, 54, 'MA9:11758', '#e08a40');
label(155, 54, 'MA18:11691', '#5a3a90');
label(204, 54, 'MA60:11593', '#2a3ab0');
label(71, 153, '12145', '#333', 8.5);
label(122, 409, '10385', '#445', 8.5);
line(141, 406, 152, 406, '#555');
line(60, 152, 70, 150, '#555');
line(80, 239.5, 95, 239.5, '#222', { 'stroke-dasharray': '3 1' });
line(118, 314.5, 140, 314.5, '#222', { 'stroke-dasharray': '4 2' });
el('rect', { x: 54.5, y: 185.5, width: 26, height: 11, fill: '#bfe5e0', stroke: '#7fb8b8' });
label(56, 194, '11830', '#4a8a8a', 8.5);
el('rect', { x: 1092.5, y: 115.5, width: 25, height: 11, fill: '#fff', stroke: '#88a8e0' });
label(1094, 124, '12310', '#3a6ac8', 8.2);
label(1076, 415, '50分49秒', '#333', 8.5);

// trend lines + hand-drawn arrows
line(55, 196, 1118, 196, '#c8503a', { 'stroke-width': 2.4 });
line(152, 406, 1118, 246, '#bf4a2c', { 'stroke-width': 2.2 });
const arrow = (x1, y1, x2, y2, hw, shaft) => {
  const d = Math.hypot(x2 - x1, y2 - y1), ux = (x2 - x1) / d, uy = (y2 - y1) / d, nx = -uy, ny = ux;
  const len = Math.min(15, d * .35), bx = x2 - ux * len, by = y2 - uy * len, n = len * .8;
  const ax = x2 - ux * n, ay = y2 - uy * n;
  const pt = (x, y) => x.toFixed(1) + ',' + y.toFixed(1);
  el('polygon', {
    fill: '#ee3322', points: [
      pt(x1 - nx * .6, y1 - ny * .6),
      pt(x1 + nx * .6, y1 + ny * .6),
      pt(bx + nx * shaft, by + ny * shaft),
      pt(ax + nx * hw, ay + ny * hw),
      pt(x2, y2),
      pt(ax - nx * hw, ay - ny * hw),
      pt(bx - nx * shaft, by - ny * shaft)
    ].join(' ')
  });
};
[[299, 373, 376, 207, 6, 3], [415, 228, 529, 319, 6, 3.2], [578, 332, 722, 215, 5.5, 3], [722, 215, 750, 272, 5, 2.8], [794, 264, 838, 216, 5, 2.8], [838, 216, 899, 255, 5, 2.8], [938, 246, 976, 212, 5, 2.8], [966, 214, 986, 225, 4, 2], [990, 240, 1070, 188, 6, 2.8]].forEach(a => arrow(...a));

// volume panel
label(55, 428, 'VOL(5,10)', '#666');
label(98, 428, 'VOLUME:35402.0000', '#777');
label(178, 428, 'MAVOL1:83181.0000', '#2a3a50');
label(260, 428, 'MAVOL2:108084.9000', '#ee9a44');
const over = { 57: 13, 84: 3, 89: 3, 95: 5, 79: 30, 100: 30, 143: 35, 169: 30, 183: 35, 313: 40, 367: 88, 361: 35, 393: 25, 563: 50, 569: 38, 772: 61, 1007: 59, 1012: 52, 964: 43, 543: 40 };
const vols = [];
for (let i = 0; i < 185; i++) {
  const x = Math.round(57 + i * 5.33);
  if (x > 1041) break;
  const near = K.reduce((a, b) => Math.abs(b.x - x) < Math.abs(a.x - x) ? b : a);
  let h = 5 + (i * 37 + (i * i) % 11) % 21;
  for (const ox in over) if (Math.abs(ox - x) < 3) h = over[ox];
  vols.push({ x, h, c: near.c });
  if (near.c === 'g' || near.c === 'k') el('rect', { x: x - 2, y: 518 - h, width: 4, height: h, fill: GRN });
  else el('rect', { x: x - 1.5, y: 518.5 - h, width: 4, height: h, fill: '#fffff0', stroke: RED });
}
const ma = n => vols.map((v, i) => {
  const s = vols.slice(Math.max(0, i - n + 1), i + 1);
  return [v.x, 518 - s.reduce((a, b) => a + b.h, 0) / s.length - 3];
});
poly(ma(10), '#d98a3a');
poly(ma(5), '#3a4a5a');

// MACD panel
label(55, 528, 'MACD(12,26,9)', '#666');
label(116, 528, 'DIFF:68.8293', '#22344a');
label(167, 528, 'DEA:45.1331', '#d07a30');
label(218, 528, 'MACD:47.3925', '#666');
const stick = [[57, -5], [75, -8], [82, 3], [110, 15], [150, 22], [165, 8], [175, -2], [190, -25], [220, -37], [235, -24], [300, -12], [340, -28], [390, -30], [425, -5], [432, 3], [500, 10], [570, 18], [578, -2], [600, -14], [640, -8], [655, 3], [700, 1], [720, 8], [745, 12], [760, -3], [800, -15], [850, -6], [870, 4], [930, 5], [955, -2], [975, -10], [1040, -12]];
const sv = x => {
  for (let i = 1; i < stick.length; i++) if (x <= stick[i][0]) {
    const a = stick[i - 1], b = stick[i];
    return a[1] + (b[1] - a[1]) * (x - a[0]) / (b[0] - a[0]);
  }
  return -10;
};
vols.forEach(v => {
  const h = sv(v.x);
  line(v.x + .5, 570, v.x + .5, 570 + h, h < 0 ? '#d84a4a' : '#1a8a2a');
});
poly([[57, 627], [70, 620], [85, 625], [110, 640], [135, 655], [155, 667], [170, 655], [190, 625], [210, 610], [240, 602], [270, 602], [300, 598], [330, 580], [360, 550], [380, 535], [400, 530], [425, 535], [450, 545], [500, 560], [530, 570], [570, 590], [585, 580], [600, 562], [640, 552], [680, 560], [720, 575], [745, 583], [770, 565], [800, 555], [840, 560], [880, 570], [930, 578], [960, 566], [1000, 570], [1040, 552]], '#2a3442');
poly([[57, 622], [80, 625], [120, 645], [160, 655], [190, 640], [220, 618], [260, 605], [310, 598], [350, 575], [390, 545], [430, 537], [470, 545], [520, 565], [570, 578], [610, 565], [660, 558], [720, 570], [770, 565], [830, 562], [900, 572], [950, 570], [1000, 568], [1040, 560]], '#d88a3a');

// x axis
[[35, '60分'], [55, '0310'], [116, '23'], [181, '26'], [244, '31'], [305, '0403'], [352, '08'], [416, '13'], [479, '16'], [544, '21'], [607, '24'], [671, '29'], [731, '0507'], [811, '11'], [938, '15'], [1002, '19']].forEach(([x, s]) => label(x, 676, s, '#666'));
el('rect', { x: 874.5, y: 669.5, width: 47, height: 10, fill: '#d8e4f8', stroke: '#5a8ad8' });
label(876, 677, '05-12 23:00', '#2a5ab0', 8);

// trade list
const T = `09:09 11890 57 -4 空平 p p
:02 11890 6 +6 双开 p p
:02 11885 2 +1 空开 g g
:03 11890 9 +9 双开 p p
- 11890 9 +9 双开 p p
:03 11890 30 +5 多开 p p
:03 11885 6 +3 空开 g g
:03 11890 12 +0 多换 p p
:04 11885 5 +0 空换 g g
:04 11890 13 +0 多换 p p
:04 11890 26 +5 多开 p p
:04 11890 4 +0 多换 p p
:05 11885 4 +1 空开 g g
:05 11885 10 +0 空换 g g
:05 11890 7 -1 空平 p p
:05 11885 4 -3 多平 g g
:06 11890 5 -4 空平 p p
:06 11890 5 +0 多换 p p
:06 11890 4 +0 多换 p p
:06 11890 5 +5 双开 p p
:07 11885 3 +0 空换 g g
:07 11885 3 -1 多平 g g
:07 11890 6 -4 空平 p p
:08 11890 9 +2 多开 p p
:08 11885 3 -1 多平 g g
:08 11890 6 +0 多换 p p
:08 11885 2 -2 双平 g g
:09 11890 74 +17 多开 p p
:09 11890 5 +0 多换 p p
:09 11890 3 +0 多换 p p
:10 11890 17 -6 空平 p p`.split('\n');
const box = document.getElementById('trades');
T.forEach((row, i) => {
  const [tm, price, vol, chg, kind, vc, kc] = row.split(' ');
  [[tm === '-' ? '' : tm, i === 0 ? 'tm0' : 'tm'], [price, 'num p'], [vol, 'num ' + vc], [chg, 'num'], [kind, 't ' + kc]].forEach(([s, cls]) => {
    const sp = document.createElement('span');
    sp.className = cls;
    sp.textContent = s;
    box.appendChild(sp);
  });
});
```
